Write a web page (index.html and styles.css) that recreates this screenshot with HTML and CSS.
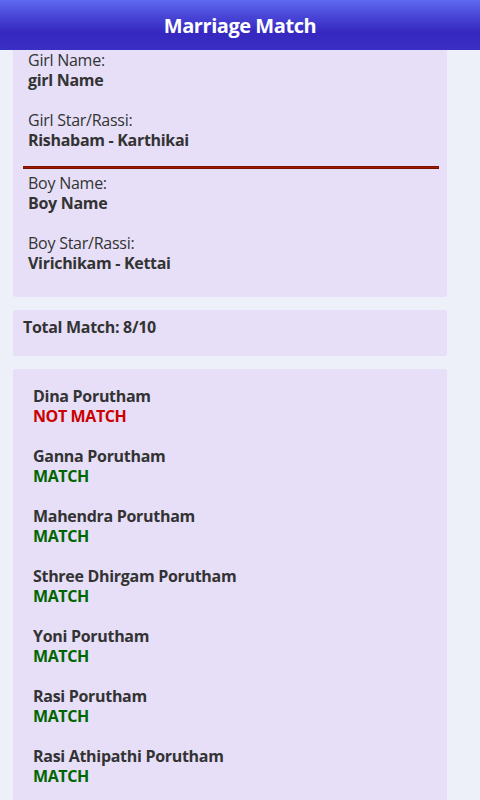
FILE: index.html
```html
<!DOCTYPE html>
<html>
<head>
<meta charset="utf-8">
<link rel="stylesheet" href="styles.css">
</head>
<body>
<header class="topbar"><h1 class="title">Marriage Match</h1></header>
<main class="content">
  <section class="card card-names">
    <div class="person">
      <div class="label">Girl Name:</div>
      <div class="value">girl Name</div>
      <div class="spacer"></div>
      <div class="label">Girl Star/Rassi:</div>
      <div class="value">Rishabam - Karthikai</div>
    </div>
    <hr class="divider">
    <div class="person">
      <div class="label">Boy Name:</div>
      <div class="value">Boy Name</div>
      <div class="spacer"></div>
      <div class="label">Boy Star/Rassi:</div>
      <div class="value">Virichikam - Kettai</div>
    </div>
  </section>
  <section class="card card-total">
    <div class="value">Total Match: 8/10</div>
  </section>
  <section class="card card-list">
    <div class="item"><div class="name">Dina Porutham</div><div class="status bad">NOT MATCH</div></div>
    <div class="item"><div class="name">Ganna Porutham</div><div class="status good">MATCH</div></div>
    <div class="item"><div class="name">Mahendra Porutham</div><div class="status good">MATCH</div></div>
    <div class="item"><div class="name">Sthree Dhirgam Porutham</div><div class="status good">MATCH</div></div>
    <div class="item"><div class="name">Yoni Porutham</div><div class="status good">MATCH</div></div>
    <div class="item"><div class="name">Rasi Porutham</div><div class="status good">MATCH</div></div>
    <div class="item"><div class="name">Rasi Athipathi Porutham</div><div class="status good">MATCH</div></div>
  </section>
</main>
</body>
</html>
```

FILE: styles.css
```css
* { box-sizing: border-box; }
html, body { margin: 0; padding: 0; }
body {
  background: #edf0f8;
  font-family: "Open Sans", "Noto Sans", sans-serif;
  font-size: 16px;
  line-height: 20px;
  color: #333333;
  overflow: hidden;
  height: 800px;
}
.topbar {
  height: 50px;
  background: linear-gradient(to bottom, #5e6af0 0%, #4a48d8 30%, #3527c0 65%, #3a2fc4 100%);
  display: flex;
  align-items: center;
  justify-content: center;
}
.title {
  margin: 0;
  color: #ffffff;
  font-size: 20px;
  font-weight: 700;
  line-height: 24px;
  letter-spacing: -0.45px;
  padding-top: 2px;
}
.content {
  display: flex;
  flex-direction: column;
  gap: 13px;
  padding: 0 33px 0 13px;
}
.card {
  background: #e6dff7;
  border-radius: 3px;
}
.card-names {
  padding: 0 8px 24px 10px;
  border-top-left-radius: 0;
  border-top-right-radius: 0;
}
.person { padding-left: 5px; }
.label { font-weight: 400; letter-spacing: -0.25px; }
.value { font-weight: 700; letter-spacing: -0.3px; }
.spacer { height: 20px; }
.divider {
  margin: 16px 0 4px 0;
  border: 0;
  height: 3px;
  background: #a01800;
  border-top: 1px solid #7a1200;
  border-bottom: 1px solid #7a1200;
}
.card-total {
  padding: 7px 10px 19px 10px;
}
.card-list {
  padding: 17px 20px 40px 20px;
  display: flex;
  flex-direction: column;
  gap: 20px;
}
.name { font-weight: 700; letter-spacing: -0.3px; }
.status { font-weight: 700; letter-spacing: -0.4px; }
.bad { color: #cc0000; }
.good { color: #006600; }
```
